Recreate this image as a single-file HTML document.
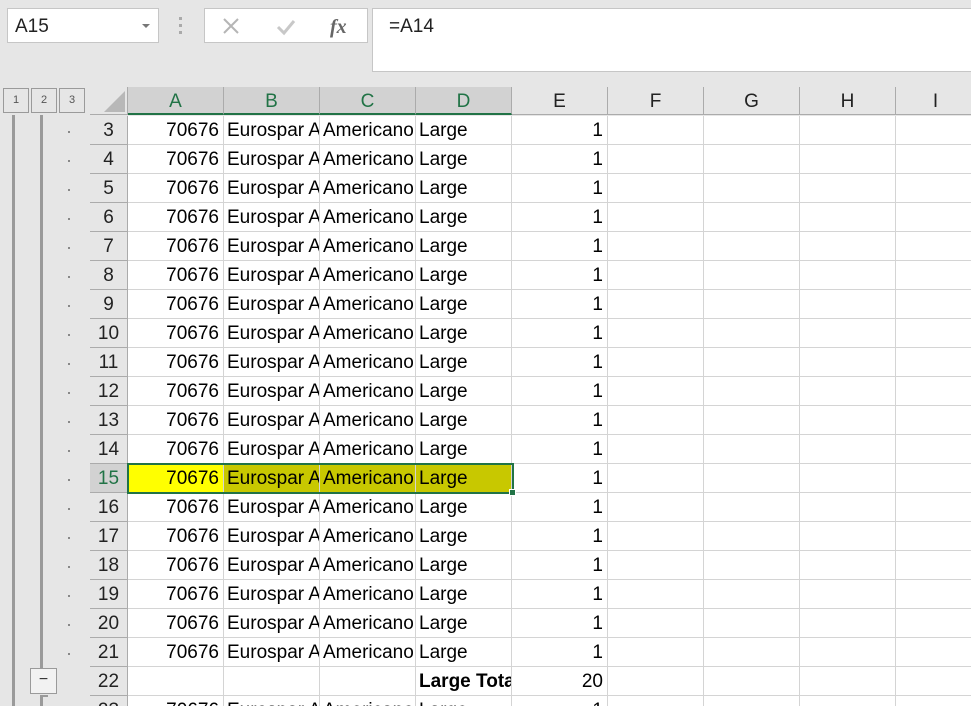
<!DOCTYPE html>
<html><head><meta charset="utf-8">
<style>
*{margin:0;padding:0;box-sizing:border-box}
html,body{width:971px;height:706px;overflow:hidden}
body{background:#e6e6e6;font-family:"Liberation Sans",sans-serif;position:relative}
.abs{position:absolute}
.box{background:#fff;border:1px solid #c6c6c6}
.row{position:absolute;left:90px;width:881px;height:29px;font-size:19px;color:#000}
.row div{position:absolute;top:0;height:29px;line-height:30px;border-right:1px solid #d4d4d4;border-bottom:1px solid #d4d4d4;background:#fff;overflow:hidden;white-space:nowrap;padding:0 4px}
.row .h{left:0;width:38px;background:#e6e6e6;border-right:1px solid #ababab;border-bottom:1px solid #ababab;text-align:center;color:#222;padding:0}
.c1{left:38px;width:96px;text-align:right}
.c2{left:134px;width:96px}
.c3{left:230px;width:96px}
.c4{left:326px;width:96px}
.c5{left:422px;width:96px;text-align:right}
.c6{left:518px;width:96px}
.c7{left:614px;width:96px}
.c8{left:710px;width:96px}
.c9{left:806px;width:80px}
.c2,.c3,.c4{padding:0 0 0 3px!important}
.hdr{position:absolute;top:87px;height:28px;line-height:30px;font-size:19px;text-align:center;background:#e6e6e6;border-right:1px solid #ababab;border-bottom:1px solid #ababab;color:#222}
.hs{background:#d2d2d2;color:#217346;border-bottom:2px solid #217346}
.ob{position:absolute;top:88px;width:26px;height:25px;border:1px solid #9a9a9a;font-size:11px;color:#555;text-align:center;line-height:23px}
.dot{position:absolute;left:68px;width:2px;height:2px;background:#888}
</style></head><body>
<div class="abs box" style="left:7px;top:8px;width:152px;height:35px;font-size:19px;line-height:35px;padding-left:7px;color:#222">A15<span style="position:absolute;right:8px;top:15px;border-left:4px solid transparent;border-right:4px solid transparent;border-top:4px solid #777"></span></div>
<div class="abs" style="left:179px;top:17px;width:3px;height:3px;background:#aaa"></div>
<div class="abs" style="left:179px;top:24px;width:3px;height:3px;background:#aaa"></div>
<div class="abs" style="left:179px;top:31px;width:3px;height:3px;background:#aaa"></div>
<div class="abs box" style="left:204px;top:8px;width:164px;height:35px">
<svg width="164" height="35" style="position:absolute;left:0;top:0"><path d="M19 10 L33 24 M33 10 L19 24" stroke="#b5b5b5" stroke-width="2"/><path d="M73 18 L79 24 L89 12" stroke="#c8c8c8" stroke-width="3" fill="none"/><text x="125" y="24" font-family="Liberation Serif" font-style="italic" font-weight="bold" font-size="20" fill="#666">fx</text></svg></div>
<div class="abs box" style="left:372px;top:8px;width:610px;height:64px;font-size:19px;padding:7px 0 0 16px;color:#222">=A14</div>

<div class="ob" style="left:3px">1</div><div class="ob" style="left:31px">2</div><div class="ob" style="left:59px">3</div>
<div class="abs" style="left:12px;top:115px;width:3px;height:591px;background:#9a9a9a"></div>
<div class="abs" style="left:40px;top:115px;width:3px;height:553px;background:#9a9a9a"></div>
<div class="abs" style="left:40px;top:695px;width:3px;height:11px;background:#9a9a9a"></div>
<div class="abs" style="left:40px;top:695px;width:8px;height:2px;background:#9a9a9a"></div>
<div class="abs" style="left:30px;top:668px;width:27px;height:26px;border:1px solid #9a9a9a;background:#f2f2f2;text-align:center;line-height:22px;font-size:16px;color:#333">−</div>

<div class="abs" style="left:90px;top:87px;width:38px;height:28px;border-right:1px solid #ababab;border-bottom:1px solid #ababab"><svg width="38" height="28"><path d="M14 25 L35 25 L35 4 Z" fill="#b8b8b8"/></svg></div>
<div class="hdr hs" style="left:128px;width:96px">A</div>
<div class="hdr hs" style="left:224px;width:96px">B</div>
<div class="hdr hs" style="left:320px;width:96px">C</div>
<div class="hdr hs" style="left:416px;width:96px">D</div>
<div class="hdr" style="left:512px;width:96px">E</div>
<div class="hdr" style="left:608px;width:96px">F</div>
<div class="hdr" style="left:704px;width:96px">G</div>
<div class="hdr" style="left:800px;width:96px">H</div>
<div class="hdr" style="left:896px;width:80px">I</div>

<div class="row" style="top:116px"><div class="h">3</div><div class="c1">70676</div><div class="c2">Eurospar A</div><div class="c3">Americano</div><div class="c4">Large</div><div class="c5">1</div><div class="c6"></div><div class="c7"></div><div class="c8"></div><div class="c9"></div></div>
<div class="row" style="top:145px"><div class="h">4</div><div class="c1">70676</div><div class="c2">Eurospar A</div><div class="c3">Americano</div><div class="c4">Large</div><div class="c5">1</div><div class="c6"></div><div class="c7"></div><div class="c8"></div><div class="c9"></div></div>
<div class="row" style="top:174px"><div class="h">5</div><div class="c1">70676</div><div class="c2">Eurospar A</div><div class="c3">Americano</div><div class="c4">Large</div><div class="c5">1</div><div class="c6"></div><div class="c7"></div><div class="c8"></div><div class="c9"></div></div>
<div class="row" style="top:203px"><div class="h">6</div><div class="c1">70676</div><div class="c2">Eurospar A</div><div class="c3">Americano</div><div class="c4">Large</div><div class="c5">1</div><div class="c6"></div><div class="c7"></div><div class="c8"></div><div class="c9"></div></div>
<div class="row" style="top:232px"><div class="h">7</div><div class="c1">70676</div><div class="c2">Eurospar A</div><div class="c3">Americano</div><div class="c4">Large</div><div class="c5">1</div><div class="c6"></div><div class="c7"></div><div class="c8"></div><div class="c9"></div></div>
<div class="row" style="top:261px"><div class="h">8</div><div class="c1">70676</div><div class="c2">Eurospar A</div><div class="c3">Americano</div><div class="c4">Large</div><div class="c5">1</div><div class="c6"></div><div class="c7"></div><div class="c8"></div><div class="c9"></div></div>
<div class="row" style="top:290px"><div class="h">9</div><div class="c1">70676</div><div class="c2">Eurospar A</div><div class="c3">Americano</div><div class="c4">Large</div><div class="c5">1</div><div class="c6"></div><div class="c7"></div><div class="c8"></div><div class="c9"></div></div>
<div class="row" style="top:319px"><div class="h">10</div><div class="c1">70676</div><div class="c2">Eurospar A</div><div class="c3">Americano</div><div class="c4">Large</div><div class="c5">1</div><div class="c6"></div><div class="c7"></div><div class="c8"></div><div class="c9"></div></div>
<div class="row" style="top:348px"><div class="h">11</div><div class="c1">70676</div><div class="c2">Eurospar A</div><div class="c3">Americano</div><div class="c4">Large</div><div class="c5">1</div><div class="c6"></div><div class="c7"></div><div class="c8"></div><div class="c9"></div></div>
<div class="row" style="top:377px"><div class="h">12</div><div class="c1">70676</div><div class="c2">Eurospar A</div><div class="c3">Americano</div><div class="c4">Large</div><div class="c5">1</div><div class="c6"></div><div class="c7"></div><div class="c8"></div><div class="c9"></div></div>
<div class="row" style="top:406px"><div class="h">13</div><div class="c1">70676</div><div class="c2">Eurospar A</div><div class="c3">Americano</div><div class="c4">Large</div><div class="c5">1</div><div class="c6"></div><div class="c7"></div><div class="c8"></div><div class="c9"></div></div>
<div class="row" style="top:435px"><div class="h">14</div><div class="c1">70676</div><div class="c2">Eurospar A</div><div class="c3">Americano</div><div class="c4">Large</div><div class="c5">1</div><div class="c6"></div><div class="c7"></div><div class="c8"></div><div class="c9"></div></div>
<div class="row" style="top:464px"><div class="h" style="background:#d2d2d2;color:#217346">15</div><div class="c1" style="background:#ffff00">70676</div><div class="c2" style="background:#c8c800">Eurospar A</div><div class="c3" style="background:#c8c800">Americano</div><div class="c4" style="background:#c8c800">Large</div><div class="c5">1</div><div class="c6"></div><div class="c7"></div><div class="c8"></div><div class="c9"></div></div>
<div class="row" style="top:493px"><div class="h">16</div><div class="c1">70676</div><div class="c2">Eurospar A</div><div class="c3">Americano</div><div class="c4">Large</div><div class="c5">1</div><div class="c6"></div><div class="c7"></div><div class="c8"></div><div class="c9"></div></div>
<div class="row" style="top:522px"><div class="h">17</div><div class="c1">70676</div><div class="c2">Eurospar A</div><div class="c3">Americano</div><div class="c4">Large</div><div class="c5">1</div><div class="c6"></div><div class="c7"></div><div class="c8"></div><div class="c9"></div></div>
<div class="row" style="top:551px"><div class="h">18</div><div class="c1">70676</div><div class="c2">Eurospar A</div><div class="c3">Americano</div><div class="c4">Large</div><div class="c5">1</div><div class="c6"></div><div class="c7"></div><div class="c8"></div><div class="c9"></div></div>
<div class="row" style="top:580px"><div class="h">19</div><div class="c1">70676</div><div class="c2">Eurospar A</div><div class="c3">Americano</div><div class="c4">Large</div><div class="c5">1</div><div class="c6"></div><div class="c7"></div><div class="c8"></div><div class="c9"></div></div>
<div class="row" style="top:609px"><div class="h">20</div><div class="c1">70676</div><div class="c2">Eurospar A</div><div class="c3">Americano</div><div class="c4">Large</div><div class="c5">1</div><div class="c6"></div><div class="c7"></div><div class="c8"></div><div class="c9"></div></div>
<div class="row" style="top:638px"><div class="h">21</div><div class="c1">70676</div><div class="c2">Eurospar A</div><div class="c3">Americano</div><div class="c4">Large</div><div class="c5">1</div><div class="c6"></div><div class="c7"></div><div class="c8"></div><div class="c9"></div></div>
<div class="row" style="top:667px"><div class="h">22</div><div class="c1"></div><div class="c2"></div><div class="c3"></div><div class="c4" style="font-weight:bold">Large Total</div><div class="c5">20</div><div class="c6"></div><div class="c7"></div><div class="c8"></div><div class="c9"></div></div>
<div class="row" style="top:696px"><div class="h">23</div><div class="c1">70676</div><div class="c2">Eurospar A</div><div class="c3">Americano</div><div class="c4">Large</div><div class="c5">1</div><div class="c6"></div><div class="c7"></div><div class="c8"></div><div class="c9"></div></div>

<div class="abs" style="left:127px;top:463px;width:387px;height:31px;border:2px solid #217346"></div>
<div class="abs" style="left:509px;top:489px;width:7px;height:7px;background:#217346;border:1px solid #fff"></div>

<div class="dot" style="top:131px"></div><div class="dot" style="top:160px"></div><div class="dot" style="top:189px"></div><div class="dot" style="top:218px"></div><div class="dot" style="top:247px"></div><div class="dot" style="top:276px"></div><div class="dot" style="top:305px"></div><div class="dot" style="top:334px"></div><div class="dot" style="top:363px"></div><div class="dot" style="top:392px"></div><div class="dot" style="top:421px"></div><div class="dot" style="top:450px"></div><div class="dot" style="top:479px"></div><div class="dot" style="top:508px"></div><div class="dot" style="top:537px"></div><div class="dot" style="top:566px"></div><div class="dot" style="top:595px"></div><div class="dot" style="top:624px"></div><div class="dot" style="top:653px"></div>
</body></html>
